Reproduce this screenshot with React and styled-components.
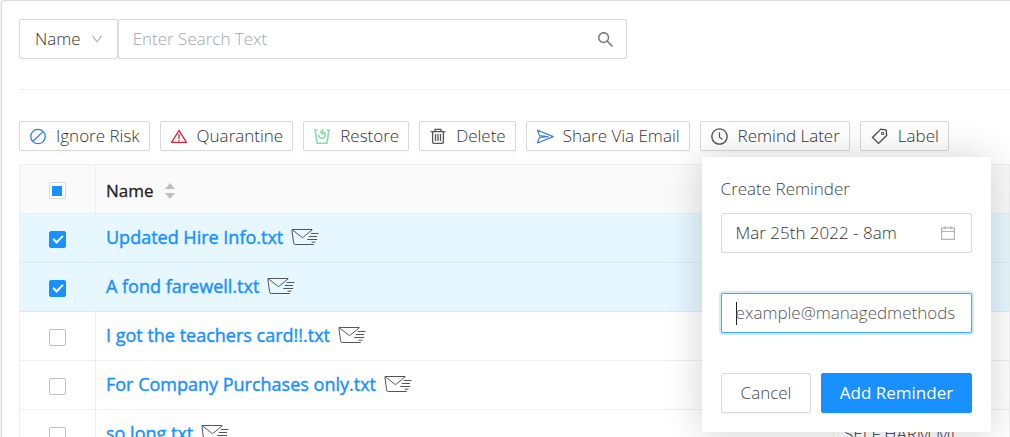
import React from 'react';
import styled, { createGlobalStyle, css } from 'styled-components';
import {
    AiOutlineCalendar, AiOutlineClockCircle, AiOutlineDown, AiOutlineSearch, AiOutlineTag
} from 'react-icons/ai';

const blue = '#1890ff';
const border = '#d9d9d9';
const line = '#efefef';

const GlobalStyle = createGlobalStyle`
    *, *::before, *::after {
        box-sizing: border-box;
    }

    html {
        height: 100%;
        overflow: hidden;
        background: #f4f4f4;
    }

    body {
        margin: 0;
        height: 100%;
        overflow: hidden;
    }

    body, button, input {
        font-family: 'Open Sans', 'Noto Sans', sans-serif;
        font-size: 17px;
        font-weight: 300;
        line-height: 24px;
        color: #333;
    }
`;

const Card = styled.main`
    margin-left: 1px;
    padding: 18px 0 0 17px;
    min-height: 100vh;
    background: #fff;
    border: 1px solid ${border};
    border-width: 1px 0 0 1px;
    border-top-left-radius: 4px;
`;

const SearchBar = styled.form`
    display: flex;
    width: 62%;
    max-width: 608px;
    height: 40px;
`;

const field = css`
    border: 1px solid ${border};
    border-radius: 2px;
    background: #fff;
`;

const FieldSelect = styled.button`
    ${field}
    display: flex;
    align-items: center;
    gap: 9px;
    padding: 0 13px 0 15px;
`;

const SearchBox = styled.div`
    ${field}
    flex: 1;
    display: flex;
    align-items: center;
    padding: 0 11px 0 14px;
`;

const PlainInput = styled.input`
    flex: 1;
    min-width: 0;
    padding: 0;
    border: 0;
    outline: 0;
    background: transparent;

    &::placeholder {
        color: #a6a6a6;
        opacity: 1;
    }
`;

const IconButton = styled.button`
    display: flex;
    padding: 0;
    border: 0;
    background: none;
    color: ${({ $tone }) => $tone};
`;

const Divider = styled.hr`
    margin: 30px 0 31px;
    border: 0;
    border-top: 1px solid ${line};
`;

const Toolbar = styled.div`
    display: flex;
    gap: 10px;
    margin-bottom: 13px;
`;

const ToolButton = styled.button`
    display: flex;
    align-items: center;
    gap: 9px;
    height: 30px;
    padding: 0 9px;
    white-space: nowrap;
    border: 1px solid ${border};
    border-radius: 2px;
    background: #fff;
    box-shadow: 0 2px 0 rgba(0, 0, 0, 0.02);

    svg {
        flex: none;
        color: ${({ $tone }) => $tone || '#555'};
    }
`;

const Anchor = styled.div`
    position: relative;
`;

const Popover = styled.form`
    position: absolute;
    z-index: 1;
    top: calc(100% + 6px);
    left: 2px;
    width: 289px;
    padding: 20px 19px 19px;
    background: #fff;
    box-shadow: 0 1px 36px rgba(0, 0, 0, 0.18);
`;

const PopoverTitle = styled.label`
    display: block;
    margin-bottom: 12px;
    color: #444;
`;

const PopoverField = styled.div`
    ${field}
    display: flex;
    align-items: center;
    height: 40px;
    margin-bottom: 40px;
    padding: 0 14px;

    ${({ $active }) => $active && css`
        border-color: #40a9ff;
        box-shadow: 0 0 0 2px rgba(24, 144, 255, 0.2);
        caret-color: transparent;

        &::before {
            content: '';
            width: 1px;
            height: 23px;
            margin-right: -1px;
            background: #222;
        }
    `}

    ${PlainInput}::placeholder {
        color: #555;
    }
`;

const Actions = styled.div`
    display: flex;
    gap: 10px;
`;

const ActionButton = styled.button`
    height: 40px;
    border: 1px solid ${border};
    border-radius: 2px;
    background: #fff;
    color: #444;
    padding: 0 19px;
    box-shadow: 0 2px 0 rgba(0, 0, 0, 0.02);

    ${({ $primary }) => $primary && css`
        flex: 1;
        padding: 0 10px;
        border-color: ${blue};
        background: ${blue};
        color: #fff;
        font-weight: 400;
        white-space: nowrap;
        box-shadow: 0 2px 0 rgba(0, 0, 0, 0.04);
    `}
`;

const Table = styled.table`
    width: 100%;
    table-layout: fixed;
    border-collapse: separate;
    border-spacing: 0;
    border: 1px solid ${line};
    border-width: 1px 0 0 1px;
    border-top-left-radius: 2px;
`;

const Head = styled.th`
    height: 49px;
    width: ${({ $width }) => $width || 'auto'};
    padding: 0 10px;
    text-align: left;
    font-weight: 500;
    -webkit-text-stroke: 0.3px;
    color: #222;
    background: #fafafa;
    border: 1px solid ${line};
    border-width: 0 1px 1px 0;
`;

const HeadLabel = styled.span`
    display: flex;
    align-items: center;
    gap: 11px;
    padding-top: 3px;
`;

const Row = styled.tr`
    background: ${({ $selected }) => ($selected ? '#e6f7ff' : '#fff')};
`;

const Cell = styled.td`
    height: 49px;
    padding: 0 10px;
    white-space: nowrap;
    border: 1px solid ${line};
    border-width: 0 1px 1px 0;
    border-bottom-color: ${({ $selected }) => ($selected ? '#dbeaf1' : line)};
`;

const CheckWrap = styled.label`
    display: flex;
    justify-content: center;
    padding-top: 3px;
`;

const Checkbox = styled.input`
    appearance: none;
    position: relative;
    width: 17px;
    height: 17px;
    margin: 0;
    border: 1px solid ${({ $partial }) => ($partial ? border : '#bfbfbf')};
    border-radius: 2px;
    background: #fff;

    &:checked {
        border-color: ${blue};
        background: ${blue};
    }

    &:checked::after {
        content: '';
        position: absolute;
        left: 5px;
        top: 1px;
        width: 6px;
        height: 10px;
        border: solid #fff;
        border-width: 0 2px 2px 0;
        transform: rotate(45deg);
    }

    ${({ $partial }) => $partial && css`
        &::after {
            content: '';
            position: absolute;
            inset: 3px 3px 2px 2px;
            background: ${blue};
        }
    `}
`;

const FileCell = styled.div`
    display: flex;
    align-items: center;
    gap: 8px;
    padding-bottom: 2px;
`;

const FileLink = styled.a`
    font-size: 18px;
    font-weight: 500;
    -webkit-text-stroke: 0.4px;
    color: ${blue};
    text-decoration: none;
`;

const BanIcon = () => (
    <svg width="18" height="18" viewBox="0 0 18 18" fill="none" stroke="currentColor" strokeWidth="1.3">
        <circle cx="9" cy="9.5" r="7.2" />
        <path d="M4 14.3 14 4.6" />
    </svg>
);

const WarningIcon = () => (
    <svg width="18" height="18" viewBox="0 0 18 18" fill="none" stroke="currentColor" strokeWidth="1.3" strokeLinejoin="round">
        <path d="M9 3.4 16.4 15.4H1.6Z" />
        <path d="M9 7v5M9 13.1v1.2" />
    </svg>
);

const RestoreIcon = () => (
    <svg width="18" height="18" viewBox="0 0 18 18" fill="none" stroke="currentColor" strokeWidth="1.6">
        <path d="M4.8 3H2L4.1 16.2H13.9L16 3H13.4" />
        <path d="M5.4 7.4C5.6 12.6 12.6 12.3 12.4 8 12.2 5.8 11 4.9 8.6 5.1" />
        <path d="M10.4 2.4 7.8 5 10.4 7.8" />
    </svg>
);

const TrashIcon = () => (
    <svg width="18" height="18" viewBox="0 0 18 18" fill="none" stroke="currentColor" strokeWidth="1.3">
        <path d="M1.6 4.7H16.4M6 4.5V2.4H12V4.5" />
        <path d="M3.6 5V15Q3.6 16.4 5 16.4H13Q14.4 16.4 14.4 15V5" />
        <path d="M6.5 7V14M9 7V14M11.5 7V14" />
    </svg>
);

const SendIcon = () => (
    <svg width="18" height="18" viewBox="0 0 18 18" fill="none" stroke="currentColor" strokeWidth="1.2" strokeLinejoin="round">
        <path d="M1.6 3.2 17.3 9.6 1.6 16 3.4 10.4 12 9.6 3.4 8.6Z" />
    </svg>
);

const MailIcon = () => (
    <svg width="28" height="18" viewBox="0 0 28 18" fill="none" stroke="#555" strokeWidth="1" strokeLinecap="round" strokeLinejoin="round">
        <path d="M21 1.5H1.2Q.8 1.5.9 2.2L2.6 14.8Q2.8 16.5 4.2 16.5H22.5" />
        <path d="M1.2 1.7 11.5 9.7 20.8 2.2" />
        <path d="M20.2 5.5H27M18.2 8.5H25.6M16.6 11.5H25.8M21 14.2H24" />
    </svg>
);

const SortIcon = () => (
    <svg width="10" height="16" viewBox="0 0 10 16" fill="#bfbfbf">
        <path d="M5 0 10 6H0ZM0 10H10L5 16Z" />
    </svg>
);

const files = [
    { name: 'Updated Hire Info.txt', selected: true },
    { name: 'A fond farewell.txt', selected: true },
    { name: 'I got the teachers card!!.txt' },
    { name: 'For Company Purchases only.txt' },
    { name: 'so long.txt', label: 'SELF HARM MI' },
];

const ReminderPopover = () => (
    <Popover>
        <PopoverTitle htmlFor="reminder-date">Create Reminder</PopoverTitle>
        <PopoverField>
            <PlainInput id="reminder-date" defaultValue="Mar 25th 2022 - 8am" />
            <IconButton type="button" aria-label="Pick a date" $tone="#b5b5b5">
                <AiOutlineCalendar size={18} />
            </IconButton>
        </PopoverField>
        <PopoverField $active>
            <PlainInput type="email" aria-label="Email" placeholder="example@managedmethods" autoFocus />
        </PopoverField>
        <Actions>
            <ActionButton type="button">Cancel</ActionButton>
            <ActionButton type="button" $primary>Add Reminder</ActionButton>
        </Actions>
    </Popover>
);

const FileRow = ({ name, selected, label }) => (
    <Row $selected={selected}>
        <Cell $selected={selected}>
            <CheckWrap>
                <Checkbox type="checkbox" aria-label={name} defaultChecked={selected} />
            </CheckWrap>
        </Cell>
        <Cell $selected={selected}>
            <FileCell>
                <FileLink href="#">{name}</FileLink>
                <MailIcon />
            </FileCell>
        </Cell>
        <Cell $selected={selected}>{label}</Cell>
    </Row>
);

const App = () => (
    <Card>
        <GlobalStyle />
        <SearchBar>
            <FieldSelect type="button" aria-haspopup="listbox">
                Name
                <AiOutlineDown size={14} color="#b0b0b0" />
            </FieldSelect>
            <SearchBox>
                <PlainInput aria-label="Search" placeholder="Enter Search Text" />
                <IconButton type="button" aria-label="Search" $tone="#777">
                    <AiOutlineSearch size={19} />
                </IconButton>
            </SearchBox>
        </SearchBar>
        <Divider />
        <Toolbar>
            <ToolButton $tone="#3b7de0"><BanIcon />Ignore Risk</ToolButton>
            <ToolButton $tone="#e0203c"><WarningIcon />Quarantine</ToolButton>
            <ToolButton $tone="#8ddcb0"><RestoreIcon />Restore</ToolButton>
            <ToolButton><TrashIcon />Delete</ToolButton>
            <ToolButton $tone="#3b7de0"><SendIcon />Share Via Email</ToolButton>
            <Anchor>
                <ToolButton><AiOutlineClockCircle size={19} />Remind Later</ToolButton>
                <ReminderPopover />
            </Anchor>
            <ToolButton><AiOutlineTag size={19} />Label</ToolButton>
        </Toolbar>
        <Table>
            <thead>
                <tr>
                    <Head $width="76px">
                        <CheckWrap>
                            <Checkbox type="checkbox" aria-label="Select all" $partial />
                        </CheckWrap>
                    </Head>
                    <Head>
                        <HeadLabel>Name<SortIcon /></HeadLabel>
                    </Head>
                    <Head $width="176px" />
                </tr>
            </thead>
            <tbody>
                {files.map(file => <FileRow key={file.name} {...file} />)}
            </tbody>
        </Table>
    </Card>
);

export default App;
